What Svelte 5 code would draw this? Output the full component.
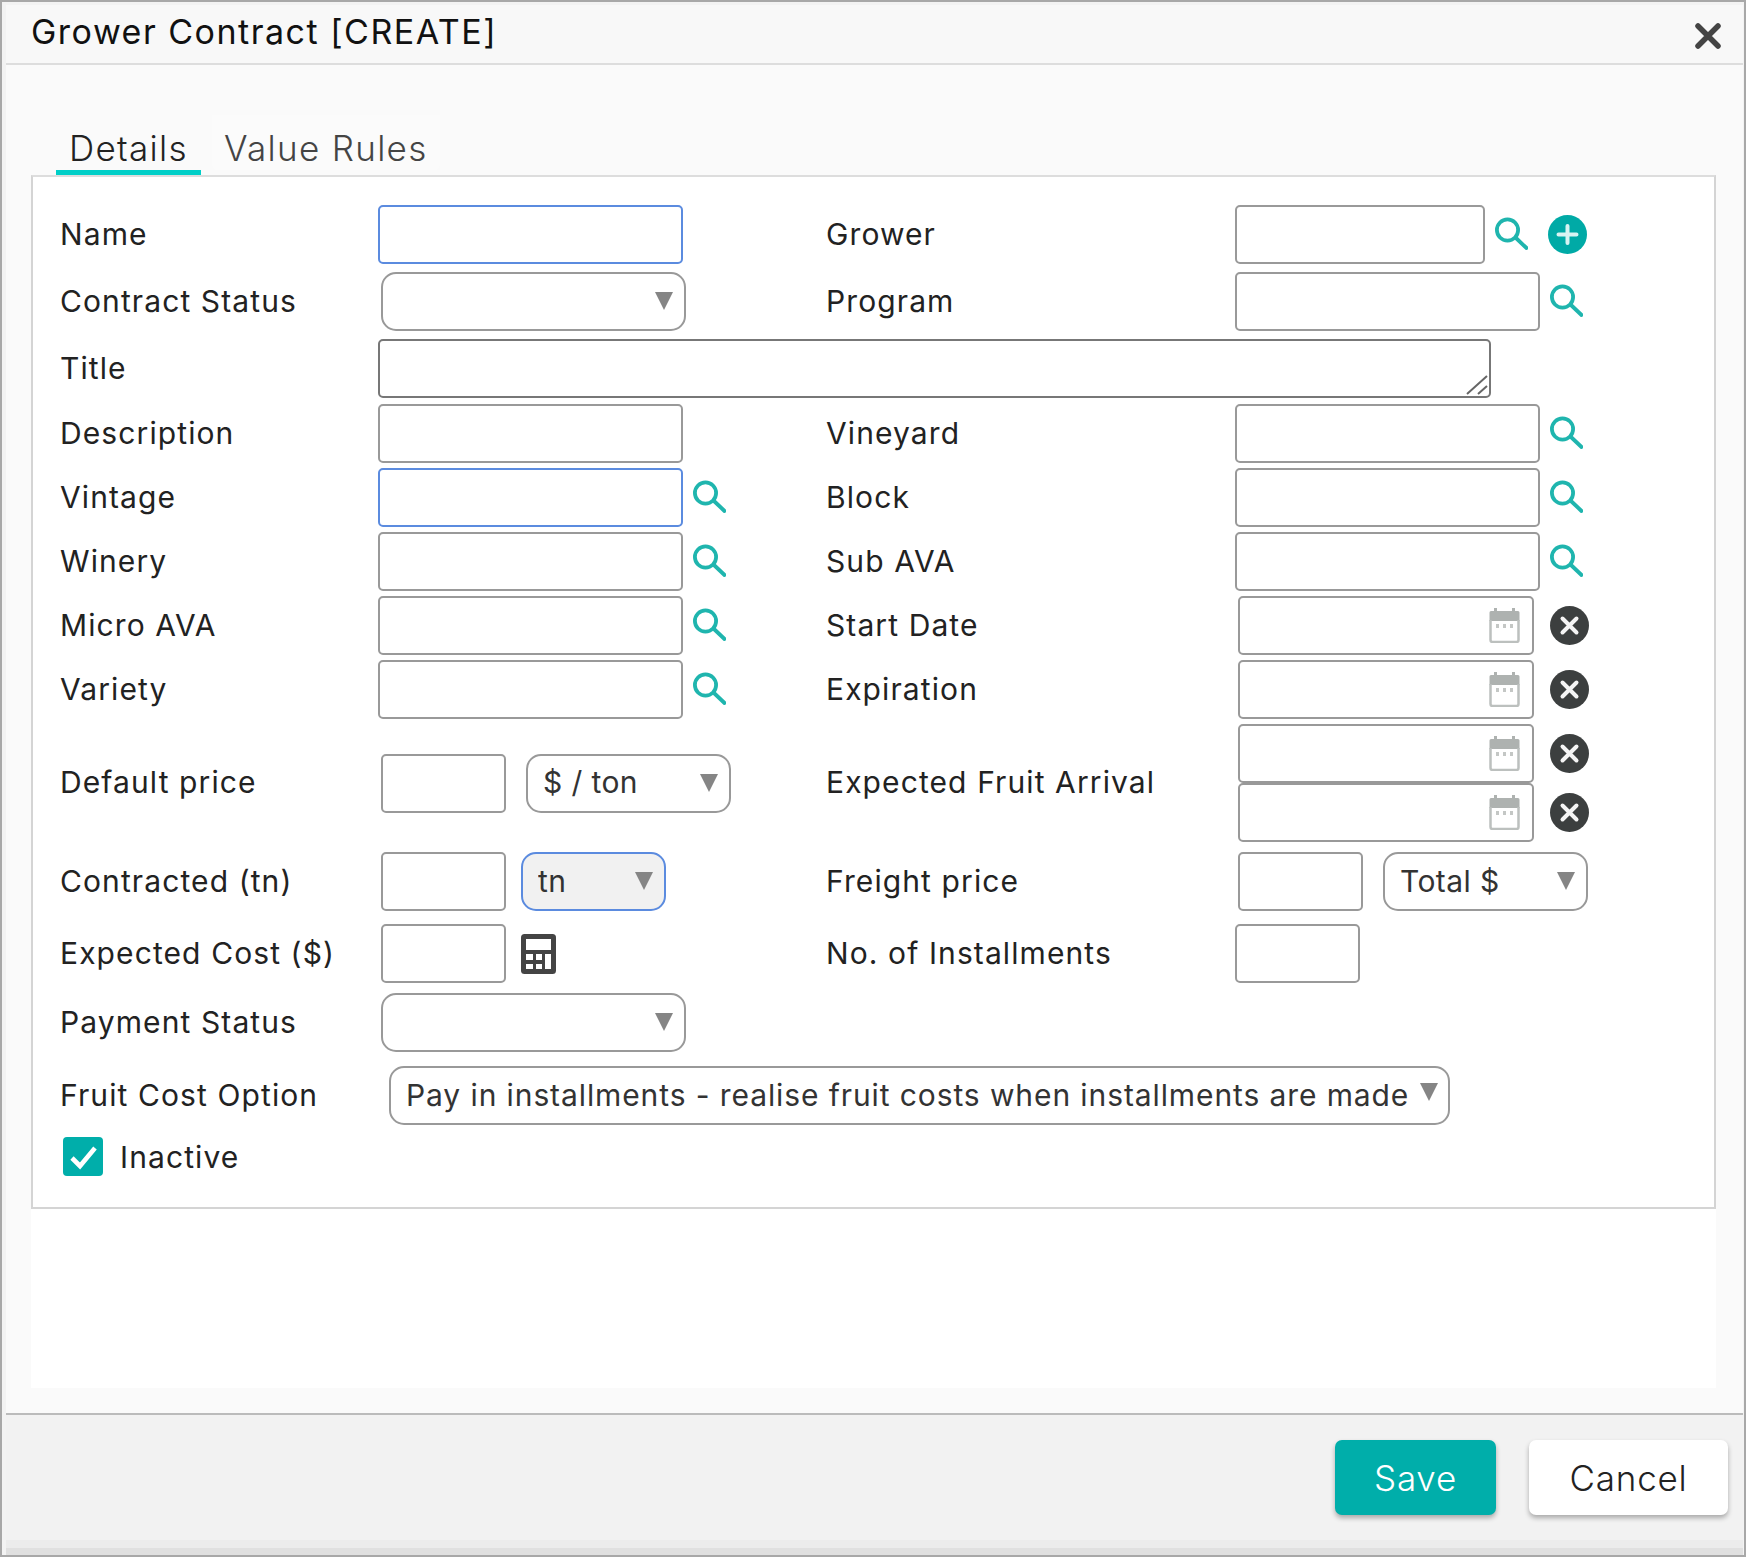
<script>
  const searchIcon = true;
</script>

{#snippet search()}
  <svg class="search" width="34" height="34" viewBox="0 0 34 34" fill="none" stroke="#1fb5ae" stroke-width="3.8" stroke-linecap="round"><circle cx="13.5" cy="13" r="10.6"/><path d="M22.5 21.5 L32.5 31"/></svg>
{/snippet}

{#snippet caret()}
  <svg class="caret" width="18" height="18" viewBox="0 0 18 18"><path d="M0 0H18L9 18Z" fill="#858585"/></svg>
{/snippet}

{#snippet dateField()}
  <div class="date-line">
    <div class="date">
      <input class="field w296" type="text" />
      <svg class="cal" width="31" height="35" viewBox="0 0 31 35" fill="none">
        <rect x="5" y="0" width="3" height="6" fill="#aeb2b0"/><rect x="23" y="0" width="3" height="6" fill="#aeb2b0"/>
        <path d="M2 3H29a1.500 1.500 0 0 1 1.500 1.500V13H.5V4.500A1.500 1.500 0 0 1 2 3Z" fill="#aeb2b0"/>
        <path d="M1.500 12V32a2 2 0 0 0 2 2H27.500a2 2 0 0 0 2-2V12" stroke="#bcc0be" stroke-width="2.500"/>
        <rect x="7" y="16" width="3" height="4" fill="#c4c7c5"/><rect x="14" y="16" width="3" height="4" fill="#c4c7c5"/><rect x="21" y="16" width="3" height="4" fill="#c4c7c5"/>
      </svg>
    </div>
    <svg class="clear" width="39" height="39" viewBox="0 0 39 39"><circle cx="19.500" cy="19.500" r="19.500" fill="#3c3f3f"/><path d="M12.500 12.500L26.500 26.500M26.500 12.500L12.500 26.500" stroke="#f4f4f4" stroke-width="4" stroke-linecap="round"/></svg>
  </div>
{/snippet}

<div class="dialog">
  <header class="head">
    <h1>Grower Contract [CREATE]</h1>
    <svg class="close" width="26" height="26" viewBox="0 0 26 26"><path d="M3 3L23 23M23 3L3 23" stroke="#444" stroke-width="5.500" stroke-linecap="round"/></svg>
  </header>

  <main class="body">
    <nav class="tabs">
      <span class="tab active">Details</span>
      <span class="tab">Value Rules</span>
    </nav>
    <div class="content">
      <section class="panel">
        <div class="row">
          <label for="f-name">Name</label>
          <div class="ctl"><input id="f-name" class="field w305 focus" type="text" /></div>
          <label for="f-grower">Grower</label>
          <div class="ctl"><input id="f-grower" class="field w250" type="text" />{@render search()}
            <svg class="plus" width="39" height="39" viewBox="0 0 39 39"><circle cx="19.500" cy="19.500" r="19.500" fill="#00aaa6"/><path d="M10.500 19.500H28.500M19.500 11V28" stroke="#d8f3f2" stroke-width="4" stroke-linecap="round"/></svg>
          </div>
        </div>
        <div class="row g8">
          <span class="lab">Contract Status</span>
          <div class="ctl"><div class="sel w305 in3"><select></select>{@render caret()}</div></div>
          <span class="lab">Program</span>
          <div class="ctl"><input class="field w305" type="text" />{@render search()}</div>
        </div>
        <div class="row g8">
          <span class="lab">Title</span>
          <div class="ctl span3">
            <div class="area"><textarea rows="1"></textarea>
              <svg class="grip" width="22" height="20" viewBox="0 0 22 20" fill="none" stroke="#666" stroke-width="2"><path d="M1 19L21 1M12 19L21 11"/></svg>
            </div>
          </div>
        </div>
        <div class="row g6">
          <span class="lab">Description</span>
          <div class="ctl"><input class="field w305" type="text" /></div>
          <span class="lab">Vineyard</span>
          <div class="ctl"><input class="field w305" type="text" />{@render search()}</div>
        </div>
        <div class="row g5">
          <span class="lab">Vintage</span>
          <div class="ctl"><input class="field w305 focus" type="text" />{@render search()}</div>
          <span class="lab">Block</span>
          <div class="ctl"><input class="field w305" type="text" />{@render search()}</div>
        </div>
        <div class="row g5">
          <span class="lab">Winery</span>
          <div class="ctl"><input class="field w305" type="text" />{@render search()}</div>
          <span class="lab">Sub AVA</span>
          <div class="ctl"><input class="field w305" type="text" />{@render search()}</div>
        </div>
        <div class="row g5">
          <span class="lab">Micro AVA</span>
          <div class="ctl"><input class="field w305" type="text" />{@render search()}</div>
          <span class="lab">Start Date</span>
          <div class="ctl in3">{@render dateField()}</div>
        </div>
        <div class="row g5">
          <span class="lab">Variety</span>
          <div class="ctl"><input class="field w305" type="text" />{@render search()}</div>
          <span class="lab">Expiration</span>
          <div class="ctl in3">{@render dateField()}</div>
        </div>
        <div class="row g5">
          <span class="lab">Default price</span>
          <div class="ctl"><input class="field w125 in3" type="text" />
            <div class="sel w205 mid20"><select><option>$ / ton</option></select>{@render caret()}</div>
          </div>
          <span class="lab">Expected Fruit Arrival</span>
          <div class="ctl in3 stack">{@render dateField()}{@render dateField()}</div>
        </div>
        <div class="row g10">
          <span class="lab">Contracted (tn)</span>
          <div class="ctl"><input class="field w125 in3" type="text" />
            <div class="sel w145 mid15 blue"><select><option>tn</option></select>{@render caret()}</div>
          </div>
          <span class="lab">Freight price</span>
          <div class="ctl in3"><input class="field w125" type="text" />
            <div class="sel w205 mid20"><select><option>Total $</option></select>{@render caret()}</div>
          </div>
        </div>
        <div class="row g13">
          <span class="lab">Expected Cost ($)</span>
          <div class="ctl"><input class="field w125 in3" type="text" />
            <svg class="calc" width="35" height="40" viewBox="0 0 35 40"><rect width="35" height="40" rx="3.500" fill="#444"/><g fill="#fff"><rect x="5" y="5" width="25" height="11"/><rect x="5" y="20" width="7" height="6"/><rect x="15" y="20" width="6" height="6"/><rect x="5" y="30" width="7" height="5"/><rect x="15" y="30" width="6" height="5"/><rect x="24" y="20" width="6" height="15"/></g></svg>
          </div>
          <span class="lab">No. of Installments</span>
          <div class="ctl"><input class="field w125" type="text" /></div>
        </div>
        <div class="row g10">
          <span class="lab">Payment Status</span>
          <div class="ctl"><div class="sel w305 in3"><select></select>{@render caret()}</div></div>
        </div>
        <div class="row g14">
          <span class="lab">Fruit Cost Option</span>
          <div class="ctl span3"><div class="sel wide"><select><option>Pay in installments - realise fruit costs when installments are made</option></select>{@render caret()}</div></div>
        </div>
        <div class="check">
          <svg width="40" height="39" viewBox="0 0 40 39"><rect width="40" height="39" rx="4" fill="#00aeaa"/><path d="M9 21L17 29L32 11" fill="none" stroke="#fff" stroke-width="4.600"/></svg>
          <span class="lab">Inactive</span>
        </div>
      </section>
    </div>
  </main>

  <footer class="foot">
    <button class="btn primary">Save</button>
    <button class="btn">Cancel</button>
  </footer>
  <div class="strip"></div>
</div>

<style>
  :global(body) { margin: 0; background: #fff; }
  .dialog {
    box-sizing: border-box; width: 1746px; height: 1557px;
    border: 2px solid #a8a8a8; padding: 3px 1px 0 4px;
    background: #f3f3f3; display: flex; flex-direction: column;
    font-family: Inter, "Liberation Sans", sans-serif; color: #222;
  }
  .head {
    box-sizing: border-box; height: 60px; flex: none; background: #f8f8f8;
    border-bottom: 2px solid #ddd; padding: 0 22px 0 25px;
    display: flex; align-items: center; justify-content: space-between;
  }
  h1 { margin: 0 0 6px; font-size: 34px; letter-spacing: 1.5px; font-weight: 400; color: #111; }
  .close { margin-top: 4px; }
  .body { flex: 1; background: #fafafa; display: flex; flex-direction: column; padding-bottom: 25px; }
  .tabs { display: flex; padding: 50px 0 0 50px; height: 60px; gap: 11px; flex: none; }
  .tab { box-sizing: border-box; height: 55px; padding: 13px 12px 0; font-size: 35px; letter-spacing: 1.3px; font-weight: 300; line-height: 40px; color: #444; background: #fbfbfb; border-radius: 0 0 6px 6px; }
  .tab.active { width: 145px; padding-left: 13px; height: 60px; border-bottom: 5px solid #00cfc8; color: #222; background: none; border-radius: 0; }
  .content { flex: 1; margin-left: 25px; width: 1685px; background: #fff; }
  .panel { box-sizing: border-box; height: 1034px; border: 2px solid #d4d4d4; border-top-color: #ddd; padding: 28px 0 0 27px; }
  .row { display: grid; grid-template-columns: 318px 448px 409px 1fr; align-items: center; }
  .g5 { margin-top: 5px; } .g6 { margin-top: 6px; } .g8 { margin-top: 8px; } .g10 { margin-top: 10px; } .g13 { margin-top: 13px; } .g14 { margin-top: 14px; }
  .lab, label { font-size: 30px; letter-spacing: 1.1px; line-height: 36px; padding-bottom: 2px; color: #222; }
  .ctl { display: flex; align-items: center; }
  .span3 { grid-column: span 3; }
  .in3 { margin-left: 3px; }
  .field { box-sizing: border-box; height: 59px; border: 2px solid #999; border-radius: 5px; background: #fff; padding: 0 12px; outline: none; font: inherit; }
  .focus { border-color: #5b8bdf; }
  .w305 { width: 305px; } .w250 { width: 250px; } .w296 { width: 296px; } .w125 { width: 125px; }
  .search { margin-left: 9px; margin-top: -2px; flex: none; }
  .plus { margin-left: 20px; flex: none; }
  .calc { margin-left: 15px; flex: none; }
  .sel { position: relative; box-sizing: border-box; height: 59px; flex: none; }
  .sel select { appearance: none; box-sizing: border-box; width: 100%; height: 100%; border: 2px solid #999; border-radius: 15px; background: #fff; padding: 0 40px 2px 15px; font: 30px Inter, "Liberation Sans", sans-serif; letter-spacing: .4px; color: #333; outline: none; }
  .caret { position: absolute; right: 13px; top: 20px; pointer-events: none; }
  .w205 { width: 205px; } .w145 { width: 145px; }
  .mid20 { margin-left: 20px; } .mid15 { margin-left: 15px; }
  .blue select { border-color: #5b8bdf; background: #f1f1f1; }
  .wide { width: 1061px; margin-left: 11px; }
  .wide select { letter-spacing: .9px; padding-right: 24px; }
  .wide .caret { right: 12px; top: 17px; }
  .area { position: relative; width: 1113px; height: 59px; }
  .area textarea { box-sizing: border-box; display: block; width: 100%; height: 100%; border: 2px solid #777; border-radius: 5px; resize: none; outline: none; background: #fff; }
  .grip { position: absolute; right: 3px; bottom: 3px; }
  .date-line { display: flex; align-items: center; }
  .date { position: relative; }
  .date input { display: block; }
  .cal { position: absolute; right: 14px; top: 12px; }
  .clear { margin-left: 16px; flex: none; }
  .stack { flex-direction: column; align-items: flex-start; }
  .check { display: flex; align-items: center; gap: 17px; margin: 12px 0 0 3px; }
  .check svg { flex: none; }
  .check .lab { padding-bottom: 0; }
  .foot { box-sizing: border-box; height: 127px; flex: none; background: #f2f2f2; border-top: 2px solid #bbb; padding: 25px 15px 0 0; display: flex; justify-content: flex-end; align-items: flex-start; gap: 33px; }
  .btn { box-sizing: border-box; width: 199px; height: 75px; border: none; border-radius: 7px; background: #fff; font: 300 35px Inter, "Liberation Sans", sans-serif; letter-spacing: .8px; color: #222; box-shadow: 0 3px 5px rgba(0,0,0,.3); }
  .primary { width: 161px; background: #00aeaa; color: #fff; }
  .strip { flex: none; height: 15px; background: linear-gradient(#ececec 0 8px, #e0e0e0 8px); }
</style>
